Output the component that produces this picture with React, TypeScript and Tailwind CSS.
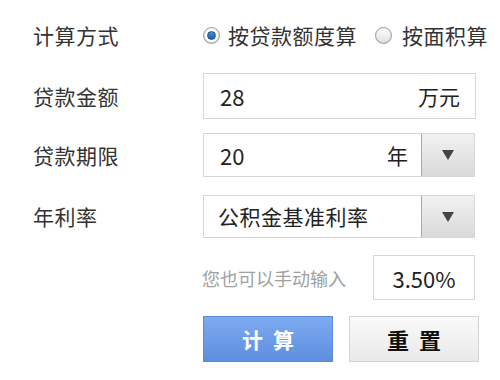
import React from "react";

const font = { fontFamily: '"Noto Sans CJK SC", "Noto Sans", sans-serif' };

function Radio({ checked }: { checked?: boolean }) {
  return (
    <span className="flex h-[17px] w-[17px] items-center justify-center rounded-full border border-[#9a9a9a] bg-gradient-to-b from-[#f4f4f4] to-[#d6d6d6]">
      {checked ? (
        <span className="flex h-[13px] w-[13px] items-center justify-center rounded-full bg-white">
          <span className="h-[9px] w-[9px] rounded-full border border-[#1d4f8a] bg-gradient-to-b from-[#4c8fd6] to-[#1f5ea8]" />
        </span>
      ) : (
        <span className="h-[13px] w-[13px] rounded-full bg-gradient-to-b from-[#fdfdfd] to-[#e2e2e2]" />
      )}
    </span>
  );
}

function Arrow() {
  return (
    <div className="flex h-full w-[53px] items-center justify-center border-l border-[#a8a8a8] bg-gradient-to-b from-[#f2f2f2] to-[#d9d9d9]">
      <svg width="12" height="10" viewBox="0 0 12 10">
        <polygon points="0,0 12,0 6,10" fill="#444" />
      </svg>
    </div>
  );
}

export default function App() {
  return (
    <div className="h-[380px] w-[500px] bg-white text-[#333]" style={font}>
      <div className="pl-[33px] pt-[20px]">
        <div className="flex h-[30px] items-center">
          <div className="w-[170px] text-[21px] leading-none tracking-[0.5px]">计算方式</div>
          <div className="flex items-center text-[21px] leading-none tracking-[0.5px]">
            <Radio checked />
            <span className="ml-[8px]">按贷款额度算</span>
            <span className="ml-[18px]">
              <Radio />
            </span>
            <span className="ml-[10px]">按面积算</span>
          </div>
        </div>

        <div className="mt-[23px] flex items-center">
          <div className="w-[170px] text-[21px] leading-none tracking-[0.5px]">贷款金额</div>
          <div className="flex h-[46px] w-[273px] items-center justify-between border border-[#d6d6d6] pl-[16px] pr-[15px] text-[21px] leading-none text-[#222]">
            <span className="text-[22px]">28</span>
            <span>万元</span>
          </div>
        </div>

        <div className="mt-[14px] flex items-center">
          <div className="w-[170px] text-[21px] leading-none tracking-[0.5px]">贷款期限</div>
          <div className="flex h-[44px] w-[272px] items-center border border-[#d6d6d6] text-[21px] leading-none text-[#222]">
            <div className="flex flex-1 items-center justify-between pl-[16px] pr-[13px]">
              <span className="text-[22px]">20</span>
              <span>年</span>
            </div>
            <Arrow />
          </div>
        </div>

        <div className="mt-[18px] flex items-center">
          <div className="w-[170px] text-[21px] leading-none tracking-[0.5px]">年利率</div>
          <div className="flex h-[43px] w-[272px] items-center border border-[#d6d6d6] text-[21px] leading-none tracking-[0.5px] text-[#222]">
            <div className="flex-1 pl-[14px]">公积金基准利率</div>
            <Arrow />
          </div>
        </div>

        <div className="mt-[17px] flex items-center">
          <div className="w-[169px]" />
          <div className="w-[171px] text-[18px] leading-none text-[#a0a0a0]">您也可以手动输入</div>
          <div className="flex h-[45px] w-[102px] items-center justify-center border border-[#d6d6d6] text-[22px] leading-none text-[#222]">
            3.50%
          </div>
        </div>

        <div className="mt-[16px] flex items-center">
          <div className="w-[170px]" />
          <div className="flex h-[46px] w-[130px] items-center justify-center border border-[#5b8ad6] bg-gradient-to-b from-[#7eaaf0] to-[#5c8fe0] text-[21px] font-bold leading-none tracking-[10px] text-white">
            <span className="ml-[10px]">计算</span>
          </div>
          <div className="ml-[16px] flex h-[46px] w-[130px] items-center justify-center border border-[#d4d4d4] bg-gradient-to-b from-[#fafafa] to-[#e9e9e9] text-[22px] font-bold leading-none tracking-[10px] text-[#111]">
            <span className="ml-[10px]">重置</span>
          </div>
        </div>
      </div>
    </div>
  );
}
